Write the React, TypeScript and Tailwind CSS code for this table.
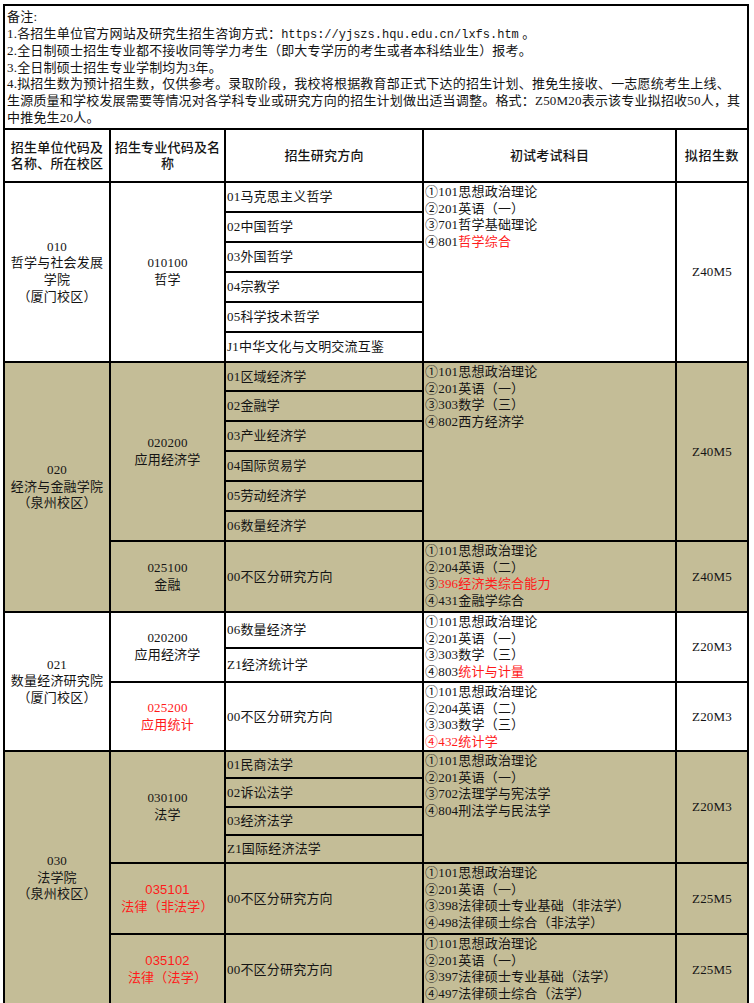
const serif = "font-['Liberation_Serif','Noto_Sans_CJK_SC',serif]";
const sans = "font-['Liberation_Sans','Noto_Sans_CJK_SC',sans-serif]";
const cell = "border-2 border-black p-0";
const unitCell = `${cell} text-center align-middle leading-[16.6px]`;
const majorCell = `${cell} text-center align-middle leading-[16.6px]`;
const dirCell = `${cell} pl-[1px] text-left align-middle`;
const examCell = `${cell} pl-[1px] pt-[1px] text-left align-top leading-[16.5px]`;
const numCell = `${cell} text-center align-middle`;

function Exam({ lines }: { lines: React.ReactNode[] }) {
  return (
    <>
      {lines.map((l, i) => (
        <div key={i} className="whitespace-nowrap">
          {l}
        </div>
      ))}
    </>
  );
}

const Red = ({ children }: { children: React.ReactNode }) => <span className="text-[#ff1a1a]">{children}</span>;

export default function App() {
  return (
    <div className={`min-h-screen bg-white pl-[3px] pt-[4px] text-[13px] tracking-[0.2px] text-[#141414] ${serif}`}>
      <div className="h-[124px] w-[746px] border-2 border-b-0 border-black pl-[2px] pt-[3px] leading-[16.6px]">
        <div>备注:</div>
        <div>
          1.各招生单位官方网站及研究生招生咨询方式：
          <span className="font-['Liberation_Mono',monospace] text-[12px] tracking-normal">https://yjszs.hqu.edu.cn/lxfs.htm</span> 。
        </div>
        <div>2.全日制硕士招生专业都不接收同等学力考生（即大专学历的考生或者本科结业生）报考。</div>
        <div>3.全日制硕士招生专业学制均为3年。</div>
        <div className="whitespace-nowrap">4.拟招生数为预计招生数，仅供参考。录取阶段，我校将根据教育部正式下达的招生计划、推免生接收、一志愿统考生上线、</div>
        <div className="whitespace-nowrap">生源质量和学校发展需要等情况对各学科专业或研究方向的招生计划做出适当调整。格式：Z50M20表示该专业拟招收50人，其</div>
        <div>中推免生20人。</div>
      </div>

      <table className="w-[746px] table-fixed border-collapse">
        <colgroup>
          <col className="w-[106px]" />
          <col className="w-[115px]" />
          <col className="w-[198px]" />
          <col className="w-[253px]" />
          <col className="w-[72px]" />
        </colgroup>
        <thead>
          <tr className={`h-[53px] ${sans}`}>
            <th className={`${cell} text-center align-middle leading-[16px] font-medium`}>
              招生单位代码及
              <br />
              名称、所在校区
            </th>
            <th className={`${cell} text-center align-middle leading-[16px] font-medium`}>
              招生专业代码及名
              <br />称
            </th>
            <th className={`${cell} text-center align-middle font-medium`}>招生研究方向</th>
            <th className={`${cell} text-center align-middle font-medium`}>初试考试科目</th>
            <th className={`${cell} text-center align-middle font-medium tracking-[0.6px]`}>拟招生数</th>
          </tr>
        </thead>
        <tbody>
          {/* 010 */}
          <tr className="h-[30px] bg-white">
            <td rowSpan={6} className={unitCell}>
              010
              <br />
              哲学与社会发展
              <br />
              学院
              <br />
              （厦门校区）
            </td>
            <td rowSpan={6} className={majorCell}>
              010100
              <br />
              哲学
            </td>
            <td className={dirCell}>01马克思主义哲学</td>
            <td rowSpan={6} className={examCell}>
              <Exam
                lines={[
                  "①101思想政治理论",
                  "②201英语（一）",
                  "③701哲学基础理论",
                  <>
                    ④801<Red>哲学综合</Red>
                  </>,
                ]}
              />
            </td>
            <td rowSpan={6} className={numCell}>
              Z40M5
            </td>
          </tr>
          <tr className="h-[30px] bg-white">
            <td className={dirCell}>02中国哲学</td>
          </tr>
          <tr className="h-[30px] bg-white">
            <td className={dirCell}>03外国哲学</td>
          </tr>
          <tr className="h-[30px] bg-white">
            <td className={dirCell}>04宗教学</td>
          </tr>
          <tr className="h-[30px] bg-white">
            <td className={dirCell}>05科学技术哲学</td>
          </tr>
          <tr className="h-[30px] bg-white">
            <td className={`${dirCell} whitespace-nowrap`}>J1中华文化与文明交流互鉴</td>
          </tr>

          {/* 020 */}
          <tr className="h-[29px] bg-[#c4bd97]">
            <td rowSpan={7} className={unitCell}>
              020
              <br />
              经济与金融学院
              <br />
              （泉州校区）
            </td>
            <td rowSpan={6} className={majorCell}>
              020200
              <br />
              应用经济学
            </td>
            <td className={dirCell}>01区域经济学</td>
            <td rowSpan={6} className={examCell}>
              <Exam lines={["①101思想政治理论", "②201英语（一）", "③303数学（三）", "④802西方经济学"]} />
            </td>
            <td rowSpan={6} className={numCell}>
              Z40M5
            </td>
          </tr>
          <tr className="h-[30px] bg-[#c4bd97]">
            <td className={dirCell}>02金融学</td>
          </tr>
          <tr className="h-[30px] bg-[#c4bd97]">
            <td className={dirCell}>03产业经济学</td>
          </tr>
          <tr className="h-[30px] bg-[#c4bd97]">
            <td className={dirCell}>04国际贸易学</td>
          </tr>
          <tr className="h-[30px] bg-[#c4bd97]">
            <td className={dirCell}>05劳动经济学</td>
          </tr>
          <tr className="h-[30px] bg-[#c4bd97]">
            <td className={dirCell}>06数量经济学</td>
          </tr>
          <tr className="h-[71px] bg-[#c4bd97]">
            <td className={majorCell}>
              025100
              <br />
              金融
            </td>
            <td className={dirCell}>00不区分研究方向</td>
            <td className={examCell}>
              <Exam
                lines={[
                  "①101思想政治理论",
                  "②204英语（二）",
                  <>
                    ③<Red>396经济类综合能力</Red>
                  </>,
                  "④431金融学综合",
                ]}
              />
            </td>
            <td className={numCell}>Z40M5</td>
          </tr>

          {/* 021 */}
          <tr className="h-[36px] bg-white">
            <td rowSpan={3} className={unitCell}>
              021
              <br />
              数量经济研究院
              <br />
              （厦门校区）
            </td>
            <td rowSpan={2} className={majorCell}>
              020200
              <br />
              应用经济学
            </td>
            <td className={dirCell}>06数量经济学</td>
            <td rowSpan={2} className={examCell}>
              <Exam
                lines={[
                  "①101思想政治理论",
                  "②201英语（一）",
                  "③303数学（三）",
                  <>
                    ④803<Red>统计与计量</Red>
                  </>,
                ]}
              />
            </td>
            <td rowSpan={2} className={numCell}>
              Z20M3
            </td>
          </tr>
          <tr className="h-[34px] bg-white">
            <td className={dirCell}>Z1经济统计学</td>
          </tr>
          <tr className="h-[68px] bg-white">
            <td className={majorCell}>
              <Red>
                025200
                <br />
                应用统计
              </Red>
            </td>
            <td className={dirCell}>00不区分研究方向</td>
            <td className={examCell}>
              <Exam
                lines={[
                  "①101思想政治理论",
                  "②204英语（二）",
                  "③303数学（三）",
                  <Red>④432统计学</Red>,
                ]}
              />
            </td>
            <td className={numCell}>Z20M3</td>
          </tr>

          {/* 030 */}
          <tr className="h-[27px] bg-[#c4bd97]">
            <td rowSpan={6} className={unitCell}>
              030
              <br />
              法学院
              <br />
              （泉州校区）
            </td>
            <td rowSpan={4} className={majorCell}>
              030100
              <br />
              法学
            </td>
            <td className={dirCell}>01民商法学</td>
            <td rowSpan={4} className={examCell}>
              <Exam lines={["①101思想政治理论", "②201英语（一）", "③702法理学与宪法学", "④804刑法学与民法学"]} />
            </td>
            <td rowSpan={4} className={numCell}>
              Z20M3
            </td>
          </tr>
          <tr className="h-[29px] bg-[#c4bd97]">
            <td className={dirCell}>02诉讼法学</td>
          </tr>
          <tr className="h-[28px] bg-[#c4bd97]">
            <td className={dirCell}>03经济法学</td>
          </tr>
          <tr className="h-[28px] bg-[#c4bd97]">
            <td className={dirCell}>Z1国际经济法学</td>
          </tr>
          <tr className="h-[71px] bg-[#c4bd97]">
            <td className={`${majorCell} ${sans}`}>
              <Red>
                035101
                <br />
                法律（非法学）
              </Red>
            </td>
            <td className={dirCell}>00不区分研究方向</td>
            <td className={examCell}>
              <Exam
                lines={["①101思想政治理论", "②201英语（一）", "③398法律硕士专业基础（非法学）", "④498法律硕士综合（非法学）"]}
              />
            </td>
            <td className={numCell}>Z25M5</td>
          </tr>
          <tr className="h-[71px] bg-[#c4bd97]">
            <td className={`${majorCell} ${sans}`}>
              <Red>
                035102
                <br />
                法律（法学）
              </Red>
            </td>
            <td className={dirCell}>00不区分研究方向</td>
            <td className={examCell}>
              <Exam
                lines={["①101思想政治理论", "②201英语（一）", "③397法律硕士专业基础（法学）", "④497法律硕士综合（法学）"]}
              />
            </td>
            <td className={numCell}>Z25M5</td>
          </tr>
        </tbody>
      </table>
    </div>
  );
}
